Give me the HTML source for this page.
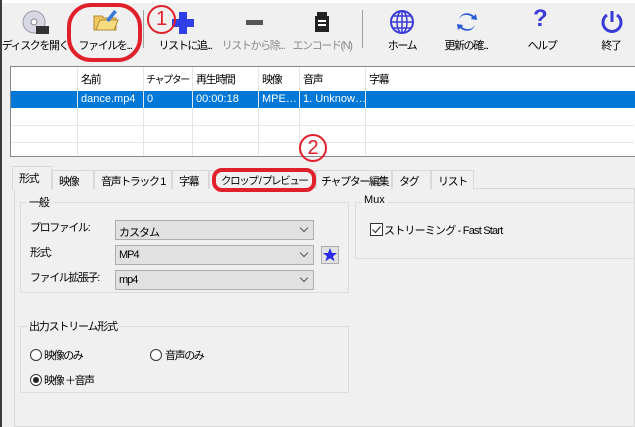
<!DOCTYPE html>
<html><head><meta charset="utf-8"><style>
*{box-sizing:border-box;margin:0;padding:0}
body{width:635px;height:427px;overflow:hidden;background:#f0f0f0;font-family:"Liberation Sans","Noto Sans CJK JP",sans-serif;font-size:11px;color:#000;position:relative}
.a{position:absolute;white-space:nowrap}
.j{letter-spacing:-1.4px}
.lbl{position:absolute;top:37px;font-size:11px;text-align:center;width:90px;margin-left:-45px;letter-spacing:-1.4px;white-space:nowrap}
.dis{color:#8a8a8a}
.sep{position:absolute;top:10px;width:1px;height:38px;background:#a0a0a0}
.col{position:absolute;top:67px;width:1px;height:89px;background:#e5e5e5}
.hl{position:absolute;left:11px;width:623px;height:1px;background:#e8e8e8}
.tab{position:absolute;top:170px;height:19px;border:1px solid #d9d9d9;border-bottom:none;background:#f0f0f0;padding:2px 0 0 6px;font-size:11px;white-space:nowrap;overflow:hidden;letter-spacing:-1.4px}
.grp{position:absolute;border:1px solid #dcdcdc}
.gl{position:absolute;background:#f0f0f0;padding:0 2px;font-size:11px;letter-spacing:-1.2px;white-space:nowrap}
.cb{position:absolute;height:20px;background:#e1e1e1;border:1px solid #adadad;padding:3px 0 0 3px;font-size:11px;letter-spacing:-1px}
.cb:after{content:"";position:absolute;right:6px;top:4px;width:5px;height:5px;border-right:1px solid #555;border-bottom:1px solid #555;transform:rotate(45deg)}
.rad{position:absolute;width:12px;height:12px;border:1px solid #333;border-radius:50%;background:#fff}
</style></head><body>
<div class="a" style="left:0;top:0;width:635px;height:3px;background:#fff"></div>
<div class="a" style="left:0;top:0;width:2px;height:427px;background:#3c3c3c"></div>

<svg class="a" style="left:22px;top:10px" width="28" height="26"><circle cx="12" cy="12" r="11" fill="#d8d8e4" stroke="#9a9aa8"/><circle cx="12" cy="12" r="3" fill="#fff" stroke="#888"/><rect x="14" y="16" width="13" height="8" fill="#333"/></svg>
<svg class="a" style="left:92px;top:8px" width="28" height="24"><path d="M2 8h8l2 2h12v12H2z" fill="#f0c860" stroke="#b08a30"/><path d="M4 22l4-10h18l-4 10z" fill="#f8dc80" stroke="#b08a30"/><path d="M14 12l8-10 3 2-8 10z" fill="#3a7ad8"/></svg>
<svg class="a" style="left:170px;top:10px" width="26" height="24"><path d="M9 2h8v7h7v8h-7v7H9v-7H2V9h7z" fill="#3040e8"/></svg>
<div class="a" style="left:246px;top:20px;width:17px;height:5px;background:#555"></div>
<svg class="a" style="left:312px;top:10px" width="20" height="24"><rect x="3" y="6" width="14" height="16" fill="#222"/><rect x="5" y="2" width="10" height="5" fill="#222"/><rect x="6" y="10" width="8" height="2" fill="#fff"/><rect x="6" y="14" width="8" height="2" fill="#fff"/></svg>
<svg class="a" style="left:389px;top:9px" width="26" height="26"><circle cx="13" cy="13" r="11" fill="none" stroke="#3a3ad8" stroke-width="2"/><ellipse cx="13" cy="13" rx="5" ry="11" fill="none" stroke="#3a3ad8" stroke-width="1.5"/><path d="M2 13h22M4 7h18M4 19h18M13 2v22" stroke="#3a3ad8" stroke-width="1.5"/></svg>
<svg class="a" style="left:456px;top:10px" width="22" height="24"><path d="M3 10c1-5 8-7 13-3l-1 2 6 1-1-6-2 2C12 1 4 3 3 10z" fill="#2a5ad8"/><path d="M19 14c-1 5-8 7-13 3l1-2-6-1 1 6 2-2c6 5 14 3 15-4z" fill="#2a5ad8"/></svg>
<div class="a" style="left:533px;top:5px;font-size:24px;font-weight:bold;color:#3a3ad8">?</div>
<svg class="a" style="left:599px;top:9px" width="26" height="26"><path d="M8 6a9 9 0 1 0 10 0" fill="none" stroke="#3a3ad8" stroke-width="3"/><path d="M13 2v11" stroke="#3a3ad8" stroke-width="3"/></svg>

<div class="lbl" style="left:35px">ディスクを開く</div>
<div class="lbl" style="left:105px">ファイルを...</div>
<div class="lbl" style="left:185px">リストに追...</div>
<div class="lbl dis" style="left:253px">リストから除...</div>
<div class="lbl dis" style="left:322px">エンコード(N)</div>
<div class="lbl" style="left:402px">ホーム</div>
<div class="lbl" style="left:466px">更新の確...</div>
<div class="lbl" style="left:542px">ヘルプ</div>
<div class="lbl" style="left:611px">終了</div>
<div class="sep" style="left:143px"></div>
<div class="sep" style="left:362px"></div>

<div class="a" style="left:67px;top:3px;width:75px;height:59px;border:4px solid #e0202a;border-radius:24px"></div>
<div class="a" style="left:147px;top:5px;width:29px;height:29px;border:2px solid #e0202a;border-radius:50%;color:#e0202a;font-size:20px;text-align:center;line-height:25px">1</div>

<div class="a" style="left:10px;top:66px;width:625px;height:91px;background:#fff;border:1px solid #828790;border-right:none"></div>
<div class="a" style="left:11px;top:91px;width:624px;height:17px;background:#0078d7"></div>
<div class="hl" style="top:125px"></div><div class="hl" style="top:142px"></div>
<div class="col" style="left:77px"></div><div class="col" style="left:143px"></div><div class="col" style="left:192px"></div><div class="col" style="left:258px"></div><div class="col" style="left:299px"></div><div class="col" style="left:365px"></div>
<div class="a j" style="left:81px;top:71px">名前</div>
<div class="a j" style="left:146px;top:71px;font-size:10px">チャプター</div>
<div class="a j" style="left:196px;top:71px">再生時間</div>
<div class="a j" style="left:262px;top:71px">映像</div>
<div class="a j" style="left:303px;top:71px">音声</div>
<div class="a j" style="left:369px;top:71px">字幕</div>
<div class="a" style="left:81px;top:93px;color:#fff">dance.mp4</div>
<div class="a" style="left:147px;top:93px;color:#fff">0</div>
<div class="a" style="left:196px;top:93px;color:#fff">00:00:18</div>
<div class="a" style="left:262px;top:93px;color:#fff">MPE…</div>
<div class="a" style="left:303px;top:93px;color:#fff">1. Unknow…</div>

<div class="a" style="left:299px;top:134px;width:28px;height:28px;border:2px solid #e0202a;border-radius:50%;color:#e0202a;font-size:20px;text-align:center;line-height:24px">2</div>

<div class="a" style="left:14px;top:188px;width:621px;height:239px;border:1px solid #d9d9d9;background:#f0f0f0"></div>
<div class="tab" style="left:52px;width:42px">映像</div>
<div class="tab" style="left:94px;width:78px">音声トラック 1</div>
<div class="tab" style="left:172px;width:37px">字幕</div>
<div class="tab" style="left:209px;width:107px;padding-left:11px;font-size:10.5px">クロップ / プレビュー</div>
<div class="tab" style="left:316px;width:76px;padding-left:4px">チャプター編集</div>
<div class="tab" style="left:392px;width:39px">タグ</div>
<div class="tab" style="left:431px;width:43px">リスト</div>
<div class="tab" style="left:12px;top:166px;width:40px;height:24px;padding-top:3px">形式</div>
<div class="a" style="left:212px;top:168px;width:104px;height:24px;border:4px solid #e0202a;border-radius:10px"></div>

<div class="grp" style="left:20px;top:202px;width:329px;height:91px"></div>
<div class="gl" style="left:27px;top:194px">一般</div>
<div class="a j" style="left:30px;top:219px">プロファイル:</div>
<div class="a j" style="left:30px;top:244px">形式:</div>
<div class="a j" style="left:30px;top:269px">ファイル拡張子:</div>
<div class="cb" style="left:115px;top:220px;width:199px">カスタム</div>
<div class="cb" style="left:115px;top:245px;width:199px">MP4</div>
<div class="cb" style="left:115px;top:270px;width:199px">mp4</div>
<svg class="a" style="left:321px;top:246px" width="18" height="18"><rect x="0.5" y="0.5" width="17" height="17" fill="#e1e1e1" stroke="#adadad"/><path d="M9 2l2 5h5l-4 3.3 1.6 5L9 12.3 4.4 15.3 6 10.3 2 7h5z" fill="#2a2ae8"/></svg>

<div class="grp" style="left:20px;top:326px;width:329px;height:67px"></div>
<div class="gl" style="left:27px;top:318px">出力ストリーム形式</div>
<div class="rad" style="left:30px;top:349px"></div><div class="a j" style="left:44px;top:347px">映像のみ</div>
<div class="rad" style="left:150px;top:349px"></div><div class="a j" style="left:165px;top:347px">音声のみ</div>
<div class="rad" style="left:30px;top:374px"></div><div class="a" style="left:33px;top:377px;width:6px;height:6px;border-radius:50%;background:#222"></div><div class="a j" style="left:44px;top:372px">映像 ＋音声</div>

<div class="grp" style="left:355px;top:202px;width:285px;height:57px"></div>
<div class="gl" style="left:362px;top:194px;letter-spacing:0">Mux</div>
<svg class="a" style="left:370px;top:223px" width="13" height="13"><rect x="0.5" y="0.5" width="12" height="12" fill="#fff" stroke="#333"/><path d="M2.5 6.5l3 3 5-6" fill="none" stroke="#333" stroke-width="1.2"/></svg>
<div class="a" style="left:384px;top:222px;letter-spacing:-0.8px">ストリーミング - Fast Start</div>
</body></html>
